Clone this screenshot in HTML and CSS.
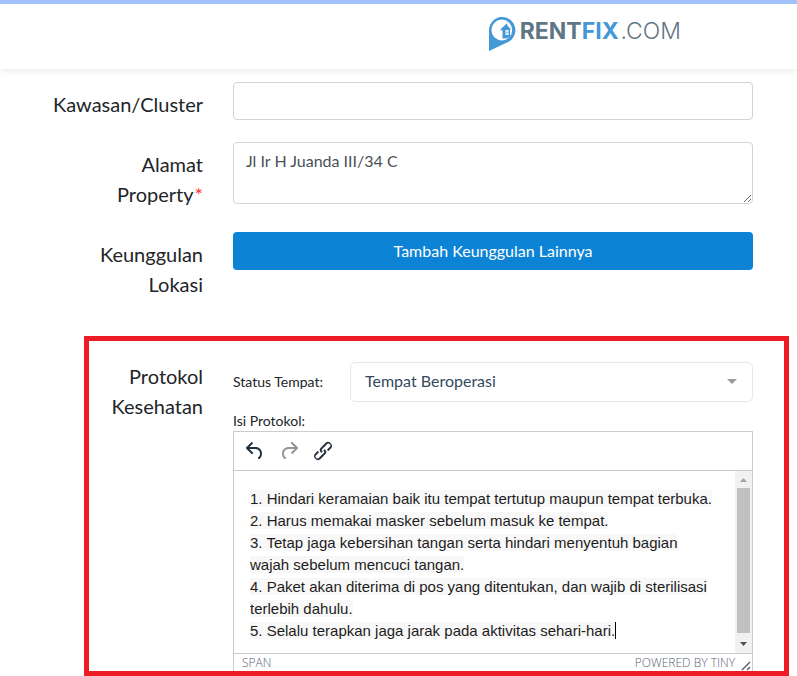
FILE: index.html
```
<!DOCTYPE html>
<html lang="id">
<head>
<meta charset="utf-8">
<meta name="viewport" content="width=device-width, initial-scale=1">
<title>Rentfix.com</title>
<link rel="stylesheet" href="styles.css">
</head>
<body>
<header class="header">
  <a class="logo" href="#">
    <svg class="logo-mark" viewBox="0 0 28 36" aria-hidden="true">
      <path fill="#4398d6" d="M1 36V15A13.200 13.200 0 1 1 19.500 27.300Z"/>
      <circle cx="13.800" cy="15" r="10.400" fill="#fff"/>
      <path fill="#4398d6" d="M12.500 14.200 19.300 8V10.500l3.500 3.500-.8 1v6.500A10 10 0 0 1 14.500 23.500V15l-2 .5Z"/>
      <path fill="#fff" d="M17.500 15h3v5h-3Z"/>
      <path fill="#4398d6" d="M18.500 16.500h1v2h-1Z"/>
    </svg>
    <span class="logo-text"><b>RENT</b><b class="logo-accent">FIX</b><span class="logo-tld">.COM</span></span>
  </a>
</header>

<form class="form">
  <div class="row">
    <label class="row-label" for="cluster">Kawasan/Cluster</label>
    <div class="row-field"><input class="control" id="cluster" type="text"></div>
  </div>
  <div class="row">
    <label class="row-label" for="address">Alamat Property<span class="required">*</span></label>
    <div class="row-field"><textarea class="control control-area" id="address" rows="2">Jl Ir H Juanda III/34 C</textarea></div>
  </div>
  <div class="row">
    <label class="row-label" for="advantages">Keunggulan Lokasi</label>
    <div class="row-field"><button class="button" id="advantages" type="button">Tambah Keunggulan Lainnya</button></div>
  </div>

  <section class="highlight">
    <div class="row">
      <div class="row-label" id="protocol-label">Protokol Kesehatan</div>
      <div class="row-field">
        <div class="status">
          <label class="small-label" for="status">Status Tempat:</label>
          <div class="select-wrap">
            <select class="select" id="status"><option>Tempat Beroperasi</option></select>
            <svg class="select-arrow" viewBox="0 0 10 5" aria-hidden="true"><path fill="#999" d="M0 0h10L5 5Z"/></svg>
          </div>
        </div>
        <div class="small-label editor-label" id="content-label">Isi Protokol:</div>
        <div class="editor">
          <div class="toolbar">
            <button class="tool" type="button" aria-label="Undo">
              <svg viewBox="0 0 24 24"><path d="M6.400 8H12c3.700 0 6.200 2 6.800 5.100.6 2.700-.4 5.600-2.300 6.800a1 1 0 0 1-1-1.800c1.100-.6 1.800-2.700 1.400-4.600-.5-2.100-2.100-3.500-4.900-3.500H6.400l3.300 3.300a1 1 0 1 1-1.400 1.400l-5-5a1 1 0 0 1 0-1.400l5-5a1 1 0 0 1 1.400 1.400L6.400 8Z"/></svg>
            </button>
            <button class="tool" type="button" aria-label="Redo" disabled>
              <svg viewBox="0 0 24 24"><path d="M17.600 10H12c-2.800 0-4.400 1.400-4.900 3.500-.4 2 .3 4 1.400 4.600a1 1 0 1 1-1 1.800c-2-1.200-2.900-4.100-2.300-6.800.6-3 3-5.100 6.800-5.100h5.600l-3.300-3.300a1 1 0 1 1 1.400-1.400l5 5a1 1 0 0 1 0 1.400l-5 5a1 1 0 0 1-1.400-1.400l3.300-3.300Z"/></svg>
            </button>
            <button class="tool" type="button" aria-label="Link">
              <svg viewBox="0 0 24 24"><path d="M6.200 12.300a1 1 0 0 1 1.400 1.400l-2 2a2 2 0 1 0 2.600 2.800l4.800-4.800a1 1 0 0 0 0-1.400 1 1 0 1 1 1.400-1.300 2.900 2.900 0 0 1 0 4L9.600 20a3.900 3.900 0 0 1-5.500-5.500l2-2Zm11.600-.6a1 1 0 0 1-1.400-1.400l2-2a2 2 0 1 0-2.600-2.800L11 10.300a1 1 0 0 0 0 1.400A1 1 0 1 1 9.600 13a2.900 2.900 0 0 1 0-4L14.400 4a3.900 3.900 0 0 1 5.500 5.500l-2 2Z"/></svg>
            </button>
          </div>
          <div class="editor-body">
            <div class="content" contenteditable="true" role="textbox" aria-multiline="true" aria-labelledby="content-label" spellcheck="false"><span class="content-text">1. Hindari keramaian baik itu tempat tertutup maupun tempat terbuka.<br>2. Harus memakai masker sebelum masuk ke tempat.<br>3. Tetap jaga kebersihan tangan serta hindari menyentuh bagian wajah sebelum mencuci tangan.<br>4. Paket akan diterima di pos yang ditentukan, dan wajib di sterilisasi terlebih dahulu.<br>5. Selalu terapkan jaga jarak pada aktivitas sehari-hari.</span><span class="caret"></span></div>
            <div class="scrollbar" aria-hidden="true">
              <svg class="scroll-arrow" viewBox="0 0 17 17"><path fill="#a3a3a3" d="M5 11h7L8.500 7Z"/></svg>
              <div class="scroll-thumb"></div>
              <svg class="scroll-arrow scroll-down" viewBox="0 0 17 17"><path fill="#505050" d="M5 6h7L8.500 10Z"/></svg>
            </div>
          </div>
          <div class="statusbar">
            <span>SPAN</span>
            <a class="powered" href="#">POWERED BY TINY</a>
            <svg class="resize" viewBox="0 0 10 10" aria-hidden="true"><path fill="none" stroke="#596577" stroke-width="1.500" d="M1 9 9 1M6 9 9 6"/></svg>
          </div>
        </div>
      </div>
    </div>
  </section>
</form>
</body>
</html>
```
FILE: styles.css
```
* {
  box-sizing: border-box;
}

body {
  margin: 0;
  background: #fff;
  color: #212529;
  font-family: Lato, "Liberation Sans", sans-serif;
  font-size: 16px;
  line-height: 24px;
}

.header {
  display: flex;
  justify-content: flex-end;
  height: 69px;
  padding: 11px 116px 0 16px;
  border-top: 4px solid #a1c2fa;
  box-shadow: 0 1px 8px rgba(0, 0, 0, 0.1);
}

.logo {
  display: flex;
  gap: 4px;
  height: 36px;
  color: #5f7685;
  text-decoration: none;
}

.logo-mark {
  width: 28px;
  height: 36px;
}

.logo-text {
  font-family: Inter, sans-serif;
  font-size: 23px;
  line-height: 32px;
  white-space: nowrap;
}

.logo-accent {
  color: #4398d6;
}

.logo-tld {
  margin-left: 2px;
  font-weight: 300;
}

.form {
  padding-top: 13px;
}

.row {
  display: flex;
  gap: 30px;
  margin: 0 44px 22px 53px;
}

.row-label {
  flex: none;
  width: 150px;
  padding: 7px 0 1px;
  font-size: 20px;
  line-height: 30px;
  text-align: right;
}

.required {
  margin-left: 1px;
  color: #f33;
}

.row-field {
  flex: 1;
  min-width: 0;
}

.control {
  display: block;
  width: 100%;
  height: 38px;
  padding: 6px 12px;
  border: 1px solid #ced4da;
  border-radius: 4px;
  background: #fff;
  color: #495057;
  font: inherit;
}

.control-area {
  height: 62px;
  resize: vertical;
}

.button {
  display: block;
  width: 100%;
  height: 38px;
  padding: 0 12px;
  border: 0;
  border-radius: 4px;
  background: #0d83d5;
  color: #fff;
  font: inherit;
}

.highlight {
  margin: 36px 8px 0 84px;
  padding-top: 20px;
  border: 5px solid #ee1c24;
}

.highlight .row {
  margin: 0 31px 0 0;
}

.highlight .row-label {
  width: 114px;
  padding: 0;
}

.status {
  display: flex;
  align-items: center;
  padding-top: 1px;
}

.small-label {
  flex: none;
  width: 117px;
  font-size: 14px;
  line-height: 20px;
}

.editor-label {
  padding-top: 9px;
}

.select-wrap {
  position: relative;
  flex: 1;
}

.select {
  display: block;
  width: 100%;
  height: 40px;
  padding: 0 40px 2px 14px;
  border: 1px solid #e8e8e8;
  border-radius: 5px;
  appearance: none;
  background: #fff;
  color: #35495e;
  font: inherit;
}

.select-arrow {
  position: absolute;
  top: 17px;
  right: 16px;
  width: 10px;
  height: 5px;
  pointer-events: none;
}

.editor {
  border: 1px solid #ccc;
  border-bottom: 0;
}

.toolbar {
  display: flex;
  height: 39px;
  padding: 2px 4px;
  border-bottom: 1px solid #ccc;
}

.tool {
  display: flex;
  align-items: center;
  justify-content: center;
  width: 34px;
  height: 34px;
  padding: 0;
  border: 0;
  background: none;
}

.tool svg {
  width: 24px;
  height: 24px;
  fill: #222f3e;
}

.tool:disabled svg {
  opacity: 0.5;
}

.editor-body {
  display: flex;
}

.content {
  flex: 1;
  min-width: 0;
  padding: 17px 16px 11px;
  outline: 0;
  color: #1d1c1d;
  font-family: "Liberation Sans", Arial, sans-serif;
  font-size: 15px;
  line-height: 22px;
}

.content-text {
  background: #f8f8f8;
}

.caret {
  display: inline-block;
  width: 1px;
  height: 17px;
  background: #000;
  vertical-align: text-bottom;
}

.scrollbar {
  display: flex;
  flex-direction: column;
  width: 17px;
  background: #f1f1f1;
}

.scroll-arrow {
  display: block;
  width: 17px;
  height: 17px;
}

.scroll-down {
  margin-top: 3px;
}

.scroll-thumb {
  flex: 1;
  margin: 0 2px;
  background: #c1c1c1;
}

.statusbar {
  display: flex;
  align-items: center;
  height: 18px;
  padding: 0 1px 0 8px;
  border-top: 1px solid #ccc;
  color: #59636f;
  font-family: "Open Sans", sans-serif;
  font-size: 12px;
  font-weight: 300;
  line-height: 16px;
}

.powered {
  margin-left: auto;
  color: inherit;
  text-decoration: none;
}

.resize {
  align-self: flex-end;
  width: 10px;
  height: 10px;
  margin-left: 6px;
}
```
